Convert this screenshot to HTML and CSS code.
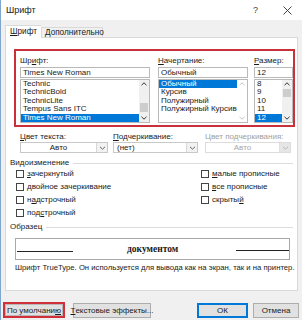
FILE: index.html
```html
<!DOCTYPE html>
<html lang="ru">
<head>
<meta charset="utf-8">
<link rel="stylesheet" href="styles.css">
</head>
<body>
<div class="win">
  <div class="titlebar">
    <span class="title">Шрифт</span>
    <span class="help">?</span>
    <span class="close"><svg width="9" height="9" viewBox="0 0 9 9"><path d="M0.5 0.5L8.5 8.5M8.5 0.5L0.5 8.5" stroke="#333" stroke-width="0.9" fill="none"/></svg></span>
  </div>
  <div class="tabs">
    <div class="tab active"><u>Ш</u>рифт</div>
    <div class="tab">Дополнительно</div>
  </div>
  <div class="panel">
    <div class="fontbox">
      <div class="col c-font">
        <div class="lbl">Шр<u>и</u>фт:</div>
        <div class="input">Times New Roman</div>
        <div class="list">
          <div class="items">
            <div class="it">Technic</div>
            <div class="it">TechnicBold</div>
            <div class="it">TechnicLite</div>
            <div class="it">Tempus Sans ITC</div>
            <div class="it sel">Times New Roman</div>
          </div>
          <div class="sb">
            <svg class="ar" width="10" height="8" viewBox="0 0 10 8"><path d="M2.5 5.2L5 2.8L7.5 5.2" stroke="#333" stroke-width="1" fill="none"/></svg>
            <div class="track"><div class="thumb t-font"></div></div>
            <svg class="ar" width="10" height="8" viewBox="0 0 10 8"><path d="M2.5 2.8L5 5.2L7.5 2.8" stroke="#333" stroke-width="1" fill="none"/></svg>
          </div>
        </div>
      </div>
      <div class="col c-style">
        <div class="lbl"><u>Н</u>ачертание:</div>
        <div class="input">Обычный</div>
        <div class="list">
          <div class="items">
            <div class="it sel">Обычный</div>
            <div class="it">Курсив</div>
            <div class="it">Полужирный</div>
            <div class="it">Полужирный Курсив</div>
          </div>
          <div class="sb dis">
            <svg class="ar" width="10" height="8" viewBox="0 0 10 8"><path d="M2.5 5.2L5 2.8L7.5 5.2" stroke="#c4c4c4" stroke-width="1" fill="none"/></svg>
            <div class="track"></div>
            <svg class="ar" width="10" height="8" viewBox="0 0 10 8"><path d="M2.5 2.8L5 5.2L7.5 2.8" stroke="#c4c4c4" stroke-width="1" fill="none"/></svg>
          </div>
        </div>
      </div>
      <div class="col c-size">
        <div class="lbl"><u>Р</u>азмер:</div>
        <div class="input">12</div>
        <div class="list">
          <div class="items">
            <div class="it">8</div>
            <div class="it">9</div>
            <div class="it">10</div>
            <div class="it">11</div>
            <div class="it sel">12</div>
          </div>
          <div class="sb">
            <svg class="ar" width="10" height="8" viewBox="0 0 10 8"><path d="M2.5 5.2L5 2.8L7.5 5.2" stroke="#333" stroke-width="1" fill="none"/></svg>
            <div class="track"><div class="thumb t-size"></div></div>
            <svg class="ar" width="10" height="8" viewBox="0 0 10 8"><path d="M2.5 2.8L5 5.2L7.5 2.8" stroke="#333" stroke-width="1" fill="none"/></svg>
          </div>
        </div>
      </div>
    </div>

    <div class="row2">
      <div class="fld f1">
        <div class="lbl"><u>Ц</u>вет текста:</div>
        <div class="combo"><span class="cv center">Авто</span><span class="cb"><svg width="9" height="8" viewBox="0 0 9 8"><path d="M2 2.8L4.5 5.2L7 2.8" stroke="#555" stroke-width="0.9" fill="none"/></svg></span></div>
      </div>
      <div class="fld f2">
        <div class="lbl"><u>П</u>одчеркивание:</div>
        <div class="combo"><span class="cv">(нет)</span><span class="cb"><svg width="9" height="8" viewBox="0 0 9 8"><path d="M2 2.8L4.5 5.2L7 2.8" stroke="#555" stroke-width="0.9" fill="none"/></svg></span></div>
      </div>
      <div class="fld f3">
        <div class="lbl dim">Цвет подчеркивания:</div>
        <div class="combo disabled"><span class="cv center">Авто</span><span class="cb"><svg width="9" height="8" viewBox="0 0 9 8"><path d="M2 2.8L4.5 5.2L7 2.8" stroke="#b0b0b0" stroke-width="0.9" fill="none"/></svg></span></div>
      </div>
    </div>

    <div class="group"><span>Видоизменение</span><span class="rule"></span></div>
    <div class="checks">
      <div class="ccol">
        <div class="chk"><span class="box"></span><span><u>з</u>ачеркнутый</span></div>
        <div class="chk"><span class="box"></span><span><u>д</u>войное зачеркивание</span></div>
        <div class="chk"><span class="box"></span><span>н<u>а</u>дстрочный</span></div>
        <div class="chk"><span class="box"></span><span>под<u>с</u>трочный</span></div>
      </div>
      <div class="ccol c2">
        <div class="chk"><span class="box"></span><span><u>м</u>алые прописные</span></div>
        <div class="chk"><span class="box"></span><span><u>в</u>се прописные</span></div>
        <div class="chk"><span class="box"></span><span>скрыты<u>й</u></span></div>
      </div>
    </div>

    <div class="group g2"><span>Образец</span><span class="rule"></span></div>
    <div class="sample">
      <span class="sl l1"></span>
      <span class="stext">документом</span>
      <span class="sl l2"></span>
    </div>
    <div class="desc">Шрифт TrueType. Он используется для вывода как на экран, так и на принтер.</div>
  </div>

  <div class="buttons">
    <div class="redwrap"><div class="btn b-def">По умолчани<u>ю</u></div></div>
    <div class="btn b-fx"><u>Т</u>екстовые эффекты...</div>
    <div class="spacer"></div>
    <div class="btn b-ok">ОК</div>
    <div class="btn b-cancel">Отмена</div>
  </div>
</div>
</body>
</html>
```

FILE: styles.css
```css
* { box-sizing: border-box; }
html, body { margin: 0; padding: 0; }
body {
  width: 302px;
  height: 320px;
  overflow: hidden;
  background: #f0f0f0;
  font-family: "Liberation Sans", Arial, sans-serif;
  font-size: 8px;
  color: #1a1a1a;
}
u { text-decoration: underline; text-underline-offset: 1px; }

.win {
  width: 302px;
  height: 320px;
  background: #f0f0f0;
  border-left: 1px solid #7ea6cf;
  display: flex;
  flex-direction: column;
}

.titlebar {
  height: 20px;
  background: #fff;
  display: flex;
  align-items: center;
  padding-left: 5px;
  font-size: 9px;
  color: #222;
}
.title { flex: 1; }
.help { width: 10px; margin-right: 20px; font-size: 9px; color: #444; }
.close { width: 9px; height: 9px; margin-right: 10px; display: flex; }

.tabs {
  height: 17px;
  display: flex;
  align-items: flex-end;
  padding-left: 4px;
  position: relative;
  z-index: 2;
}
.tab {
  height: 10px;
  line-height: 9px;
  padding: 0 3px;
  border: 1px solid #d9d9d9;
  border-bottom: none;
  background: #f0f0f0;
  font-size: 8.2px;
  width: 62px;
}
.tab.active {
  height: 13px;
  width: 36px;
  background: #fff;
  padding-left: 4px;
  line-height: 11px;
  margin-bottom: -1px;
  border-right: none;
}

.panel {
  height: 254px;
  margin-left: 4px;
  margin-right: 4px;
  background: #fff;
  border: 1px solid #d9d9d9;
  display: flex;
  flex-direction: column;
}

.fontbox {
  margin: 11px 2px 0 8px;
  height: 78px;
  border: 2px solid #c9303a;
  padding: 5px 0 0 4px;
  display: flex;
}
.col { display: flex; flex-direction: column; }
.c-font { width: 130px; }
.c-style { width: 90px; margin-left: 8px; }
.c-size { width: 39px; margin-left: 6px; }
.lbl { height: 10px; line-height: 10px; white-space: nowrap; }
.lbl.dim { color: #a0a0a0; }
.input {
  height: 11px;
  margin-top: 1px;
  border: 1px solid #b9b9b9;
  line-height: 9px;
  padding-left: 2px;
  white-space: nowrap;
}
.list {
  height: 44px;
  margin-top: 1px;
  border: 1px solid #b9b9b9;
  display: flex;
}
.items { flex: 1; overflow: hidden; }
.it { height: 8.4px; line-height: 8.4px; padding-left: 2px; white-space: nowrap; }
.it.sel { background: #0078d7; color: #fff; }
.sb {
  width: 10px;
  display: flex;
  flex-direction: column;
  background: #f0f0f0;
}
.sb.dis { background: #fff; }
.ar { display: block; flex: none; }
.track { flex: 1; position: relative; }
.thumb { position: absolute; left: 1px; right: 1px; background: #cdcdcd; }
.t-font { top: 15px; height: 9px; }
.t-size { top: 1px; height: 8px; }

.row2 {
  display: flex;
  margin: 5px 0 0 14px;
}
.fld { display: flex; flex-direction: column; }
.f1 { width: 88px; }
.f2 { width: 85px; margin-left: 5px; }
.f3 { width: 86px; margin-left: 7px; }
.combo {
  height: 11px;
  margin-top: 0;
  border: 1px solid #c8c8c8;
  display: flex;
  align-items: stretch;
  background: #fff;
}
.cv { flex: 1; line-height: 9px; padding-left: 3px; }
.cv.center { text-align: center; padding-left: 0; }
.cb {
  width: 11px;
  border-left: 1px solid #d8d8d8;
  background: #f2f2f2;
  display: flex;
  align-items: center;
  justify-content: center;
}
.combo.disabled { border-color: #dcdcdc; color: #a8a8a8; }
.combo.disabled .cb { background: #e6e6e6; border-left-color: #e0e0e0; }

.group {
  display: flex;
  align-items: center;
  height: 8px;
  margin: 6px 4px 0 4px;
  line-height: 8px;
}
.group .rule { flex: 1; height: 1px; background: #dcdcdc; margin-left: 4px; }
.group.g2 { margin-top: 4px; }

.checks { display: flex; margin-left: 10px; }
.ccol { width: 185px; display: flex; flex-direction: column; }
.ccol.c2 { width: auto; }
.chk { height: 13px; display: flex; align-items: center; white-space: nowrap; }
.box {
  width: 8px;
  height: 8px;
  border: 1px solid #444;
  background: #fff;
  margin-right: 3px;
  flex: none;
}

.sample {
  height: 22px;
  margin: 7px 0 0 9px;
  width: 275px;
  border: 1px solid #a8a8a8;
  display: flex;
  align-items: center;
}
.sl { height: 1px; background: #222; }
.l1 { width: 56px; margin-left: 1px; margin-top: 5px; }
.l2 { width: 53px; margin-left: auto; margin-top: 2px; }
.stext {
  margin-left: 54px;
  font-family: "Liberation Serif", "Times New Roman", serif;
  font-weight: bold;
  font-size: 9.5px;
}

.desc {
  margin: 3px 0 0 9px;
  height: 9px;
  line-height: 9px;
  white-space: nowrap;
  font-size: 7.7px;
}

.buttons {
  display: flex;
  align-items: center;
  margin-top: 11px;
  padding-left: 2px;
  padding-right: 3px;
}
.btn {
  height: 15px;
  border: 1px solid #adadad;
  background: #e1e1e1;
  display: flex;
  align-items: center;
  justify-content: center;
  white-space: nowrap;
}
.redwrap { border: 2px solid #d0303a; }
.b-def { width: 58px; height: 12px; border-color: #b8b8b8; }
.b-fx { width: 78px; margin-left: 8px; }
.spacer { flex: 1; }
.b-ok { width: 51px; border: 1px solid #0078d7; box-shadow: inset 0 0 0 1px #0078d7; }
.b-cancel { width: 46px; margin-left: 5px; }
```
